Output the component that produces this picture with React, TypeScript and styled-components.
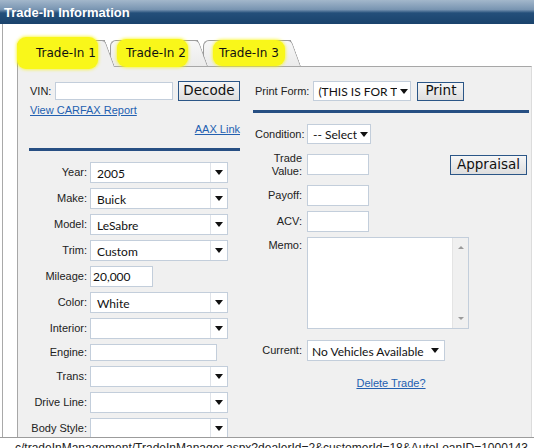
import React from "react";
import styled, { createGlobalStyle, css } from "styled-components";

const GlobalStyle = createGlobalStyle`
  html, body {
    margin: 0;
    padding: 0;
    background: #fff;
  }
  body {
    font-family: "Liberation Sans", Arial, sans-serif;
  }
`;

const Page = styled.div`
  width: 534px;
  height: 448px;
  overflow: hidden;
  display: flex;
  flex-direction: column;
  background: #fff;
`;

const Header = styled.div`
  flex: none;
  height: 24px;
  box-sizing: border-box;
  padding-left: 4px;
  display: flex;
  align-items: center;
  background: linear-gradient(#a3b7cb 0%, #7894b1 40%, #244f7a 54%, #1a436c 100%);
  color: #fff;
  font: bold 13px "Liberation Sans", Arial, sans-serif;
`;

const Body = styled.div`
  flex: 1;
  min-height: 0;
  display: flex;
  flex-direction: column;
  margin-left: 2px;
  border-left: 1px solid #a9a9a9;
  padding: 16px 0 0 14px;
`;

const TabStrip = styled.div`
  position: relative;
  z-index: 2;
  flex: none;
  height: 26px;
  display: flex;
`;

const Tab = styled.div<{ $active?: boolean; $z: number }>`
  position: relative;
  z-index: ${(p) => p.$z};
  width: 98px;
  height: 26px;
  margin-right: -5px;
  box-sizing: border-box;
  display: flex;
  align-items: center;
  font: 12px "DejaVu Sans", Verdana, sans-serif;
  color: #111;

  &::before,
  &::after {
    content: "";
    position: absolute;
    top: 0;
    bottom: ${(p) => (p.$active ? "-1px" : "0")};
    z-index: -1;
    background: ${(p) => (p.$active ? "#f0f0f0" : "linear-gradient(#f7f7f7, #ebebeb)")};
    border-top: 1px solid #9c9c9c;
  }
  &::before {
    left: 0;
    right: 10px;
    border-left: 1px solid #9c9c9c;
    border-top-left-radius: 6px;
  }
  &::after {
    right: 0;
    width: 20px;
    border-right: 1px solid #9c9c9c;
    border-top-right-radius: 4px;
    transform: skewX(20deg);
    transform-origin: bottom left;
  }
`;

const Marker = styled.span<{ $l: number; $r: number; $v: number }>`
  background: #f9f71a;
  border-radius: 9px;
  box-shadow: 0 0 3px 1px rgba(249, 247, 26, 0.7);
  padding: ${(p) => `${p.$v}px ${p.$r}px ${p.$v}px ${p.$l}px`};
  margin-left: ${(p) => (p.$l > 16 ? 0 : 16 - p.$l)}px;
  white-space: nowrap;
`;

const Panel = styled.div`
  position: relative;
  z-index: 1;
  flex: 1;
  min-height: 0;
  overflow: hidden;
  display: flex;
  margin-right: 2px;
  background: #f0f0f0;
  border-top: 1px solid #a7a7a7;
  border-left: 1px solid #a7a7a7;
  border-right: 1px solid #dcdcdc;
`;

const LeftCol = styled.div`
  flex: none;
  width: 235px;
  box-sizing: border-box;
  padding: 14px 13px 0 12px;
  display: flex;
  flex-direction: column;
`;

const RightCol = styled.div`
  flex: 1;
  box-sizing: border-box;
  padding: 14px 4px 0 2px;
  display: flex;
  flex-direction: column;
`;

const Row = styled.div<{ $mt?: number; $top?: boolean }>`
  flex: none;
  display: flex;
  align-items: ${(p) => (p.$top ? "flex-start" : "center")};
  margin-top: ${(p) => p.$mt ?? 5}px;
`;

const Label = styled.div<{ $w: number; $pr?: number; $pt?: number }>`
  flex: none;
  width: ${(p) => p.$w}px;
  box-sizing: border-box;
  padding-right: ${(p) => p.$pr ?? 3}px;
  padding-top: ${(p) => p.$pt ?? 0}px;
  text-align: right;
  white-space: nowrap;
  font: 11px/13px "Liberation Sans", Arial, sans-serif;
  color: #222;
`;

const PlainLabel = styled.div`
  flex: none;
  font: 11px/13px "Liberation Sans", Arial, sans-serif;
  color: #222;
  white-space: nowrap;
`;

const fieldBase = css`
  flex: none;
  box-sizing: border-box;
  border: 1px solid #c3cedb;
  background: #fff;
  font: 12px Lato, "Open Sans", sans-serif;
  color: #111;
`;

const TextBox = styled.div<{ $w: number; $h?: number; $ml?: number }>`
  ${fieldBase}
  width: ${(p) => p.$w}px;
  height: ${(p) => p.$h ?? 21}px;
  margin-left: ${(p) => p.$ml ?? 0}px;
  padding-left: 2px;
  display: flex;
  align-items: center;
`;

const SelectBox = styled.div<{ $w: number; $h?: number; $ml?: number }>`
  ${fieldBase}
  width: ${(p) => p.$w}px;
  height: ${(p) => p.$h ?? 21}px;
  margin-left: ${(p) => p.$ml ?? 0}px;
  display: flex;
  align-items: center;
  overflow: hidden;
`;

const SelectText = styled.span<{ $pl?: number }>`
  flex: 1;
  min-width: 0;
  padding-left: ${(p) => p.$pl ?? 6}px;
  padding-top: 1px;
  white-space: nowrap;
  overflow: hidden;
`;

const ArrowCell = styled.span<{ $split?: boolean; $w?: number }>`
  flex: none;
  align-self: stretch;
  width: ${(p) => p.$w ?? (p.$split ? 16 : 13)}px;
  display: flex;
  align-items: center;
  justify-content: center;
  border-left: ${(p) => (p.$split ? "1px solid #dfe3e9" : "none")};

  &::before {
    content: "";
    border-left: 4px solid transparent;
    border-right: 4px solid transparent;
    border-top: 5px solid #111;
  }
`;

const Button = styled.button<{ $w: number; $h?: number; $ml?: number }>`
  flex: none;
  width: ${(p) => p.$w}px;
  height: ${(p) => p.$h ?? 20}px;
  margin-left: ${(p) => p.$ml ?? 0}px;
  padding: 0;
  box-sizing: border-box;
  border: 1px solid #2b5687;
  border-radius: 0;
  background: linear-gradient(#f6f6f6, #dedede);
  font: 13.5px/1 "DejaVu Sans", Verdana, sans-serif;
  color: #111;
`;

const LinkText = styled.a<{ $align?: string; $mt?: number }>`
  flex: none;
  display: block;
  align-self: ${(p) => p.$align ?? "flex-start"};
  margin-top: ${(p) => p.$mt ?? 0}px;
  font: 11px/13px "Liberation Sans", Arial, sans-serif;
  color: #2360b0;
  text-decoration: underline;
  cursor: pointer;
`;

const Rule = styled.div<{ $mt: number; $ml: number; $mr: number }>`
  flex: none;
  height: 3px;
  margin: ${(p) => `${p.$mt}px ${p.$mr}px 0 ${p.$ml}px`};
  background: #274f83;
`;

const Spacer = styled.div`
  flex: 1;
`;

const Memo = styled.div`
  ${fieldBase}
  width: 162px;
  height: 92px;
  display: flex;
`;

const MemoArea = styled.div`
  flex: 1;
`;

const ScrollBar = styled.div`
  flex: none;
  width: 16px;
  background: #f0f0f0;
  border-left: 1px solid #e4e4e4;
  display: flex;
  flex-direction: column;
  justify-content: space-between;
  align-items: center;
  padding: 8px 0;
  box-sizing: border-box;
`;

const ScrollArrow = styled.span<{ $down?: boolean }>`
  border-left: 3px solid transparent;
  border-right: 3px solid transparent;
  ${(p) => (p.$down ? "border-top: 3px solid #9a9a9a;" : "border-bottom: 3px solid #9a9a9a;")}
`;

const StatusBar = styled.div`
  flex: none;
  height: 11px;
  box-sizing: border-box;
  overflow: hidden;
  border-top: 1px solid #9c9c9c;
  padding: 3px 0 0 15px;
  font: 12px/15px "Liberation Sans", Arial, sans-serif;
  color: #222;
  white-space: nowrap;
`;

type VehicleRow = {
  label: string;
  value?: string;
  text?: boolean;
  w?: number;
  h?: number;
};

const vehicleRows: VehicleRow[] = [
  { label: "Year", value: "2005" },
  { label: "Make", value: "Buick" },
  { label: "Model", value: "LeSabre" },
  { label: "Trim", value: "Custom" },
  { label: "Mileage", value: "20,000", text: true, w: 63 },
  { label: "Color", value: "White" },
  { label: "Interior" },
  { label: "Engine", text: true, w: 127, h: 17 },
  { label: "Trans" },
  { label: "Drive Line" },
  { label: "Body Style" },
];

const tabs = [
  { name: "Trade-In 1", l: 19, r: 2, v: 9 },
  { name: "Trade-In 2", l: 9, r: 2, v: 7 },
  { name: "Trade-In 3", l: 6, r: 6, v: 6 },
];

export default function App() {
  return (
    <Page>
      <GlobalStyle />
      <Header>Trade-In Information</Header>
      <Body>
        <TabStrip>
          {tabs.map((t, i) => (
            <Tab key={t.name} $active={i === 0} $z={tabs.length - i + (i === 0 ? 2 : 0)}>
              <Marker $l={t.l} $r={t.r} $v={t.v}>
                {t.name}
              </Marker>
            </Tab>
          ))}
        </TabStrip>
        <Panel>
          <LeftCol>
            <Row $mt={0}>
              <Label $w={25} $pr={0} style={{ textAlign: "left" }}>
                VIN:
              </Label>
              <TextBox $w={118} $h={18} />
              <Button $w={62} $ml={5}>
                Decode
              </Button>
            </Row>
            <LinkText $mt={3}>View CARFAX Report</LinkText>
            <LinkText $mt={6} $align="flex-end">
              AAX Link
            </LinkText>
            <Rule $mt={12} $ml={-1} $mr={0} />
            {vehicleRows.map((r, i) => (
              <Row key={r.label} $mt={i === 0 ? 11 : 5}>
                <Label $w={60}>{r.label}:</Label>
                {r.text ? (
                  <TextBox $w={r.w ?? 127} $h={r.h}>
                    {r.value}
                  </TextBox>
                ) : (
                  <SelectBox $w={138}>
                    <SelectText>{r.value}</SelectText>
                    <ArrowCell $split />
                  </SelectBox>
                )}
              </Row>
            ))}
          </LeftCol>
          <RightCol>
            <Row $mt={0}>
              <PlainLabel>Print Form:</PlainLabel>
              <SelectBox $w={98} $h={20} $ml={4}>
                <SelectText $pl={4}>(THIS IS FOR TEST)</SelectText>
                <ArrowCell />
              </SelectBox>
              <Button $w={47} $h={19} $ml={6}>
                Print
              </Button>
            </Row>
            <Rule $mt={9} $ml={-2} $mr={-2} />
            <Row $mt={11}>
              <Label $w={52} $pr={5}>
                Condition:
              </Label>
              <SelectBox $w={64} $h={20}>
                <SelectText $pl={5}>-- Select --</SelectText>
                <ArrowCell />
              </SelectBox>
            </Row>
            <Row $mt={7} style={{ height: 27 }}>
              <Label $w={52} $pr={5}>
                Trade
                <br />
                Value:
              </Label>
              <TextBox $w={62} />
              <Spacer />
              <Button $w={77}>Appraisal</Button>
            </Row>
            <Row $mt={7}>
              <Label $w={52} $pr={5}>
                Payoff:
              </Label>
              <TextBox $w={62} />
            </Row>
            <Row>
              <Label $w={52} $pr={5}>
                ACV:
              </Label>
              <TextBox $w={62} />
            </Row>
            <Row $top>
              <Label $w={52} $pr={5} $pt={2}>
                Memo:
              </Label>
              <Memo>
                <MemoArea />
                <ScrollBar>
                  <ScrollArrow />
                  <ScrollArrow $down />
                </ScrollBar>
              </Memo>
            </Row>
            <Row $mt={11}>
              <Label $w={52} $pr={5}>
                Current:
              </Label>
              <SelectBox $w={138}>
                <SelectText $pl={4}>No Vehicles Available</SelectText>
                <ArrowCell $w={18} />
              </SelectBox>
            </Row>
            <LinkText $mt={16} $align="center">
              Delete Trade?
            </LinkText>
          </RightCol>
        </Panel>
      </Body>
      <StatusBar>
        c/tradeInManagement/TradeInManager.aspx?dealerId=2&amp;customerId=18&amp;AutoLoanID=1000143
      </StatusBar>
    </Page>
  );
}
